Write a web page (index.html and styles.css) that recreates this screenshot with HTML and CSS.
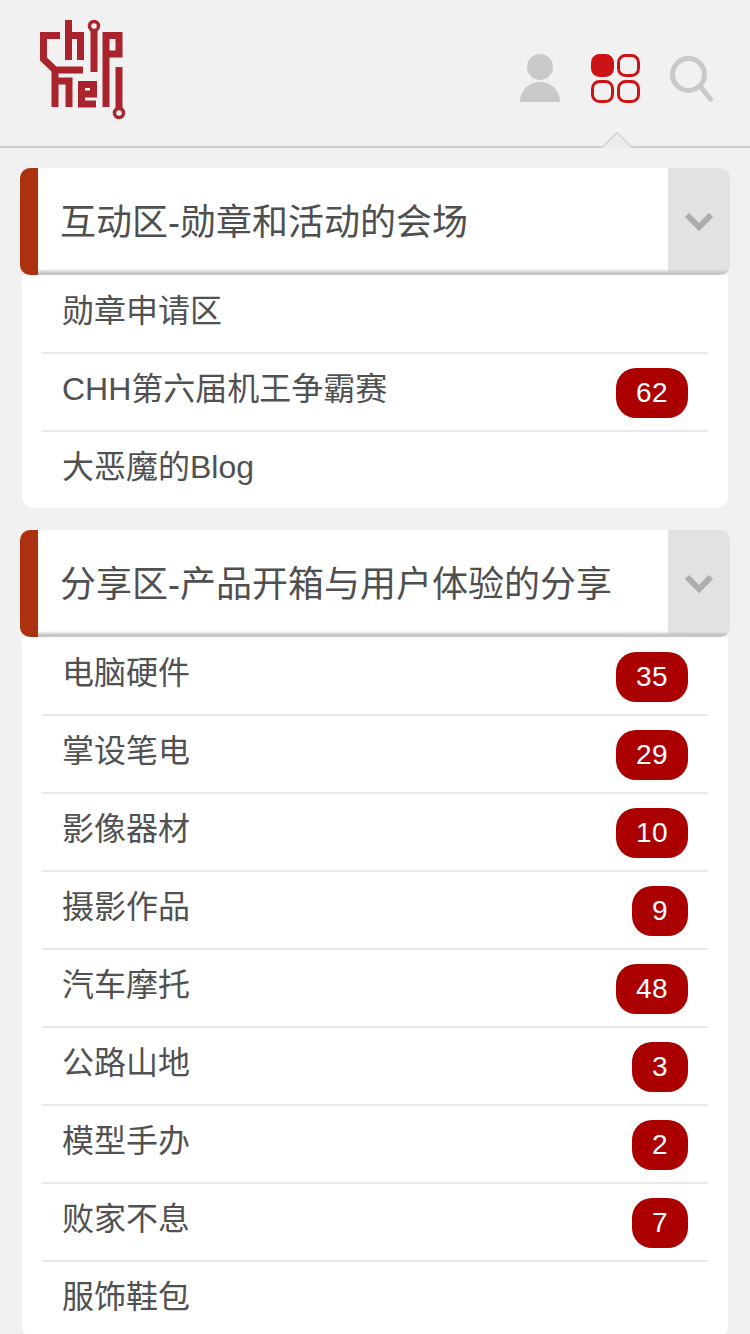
FILE: index.html
```html
<!DOCTYPE html>
<html lang="zh-CN">
<head>
<meta charset="utf-8">
<title>Chiphell</title>
<link rel="stylesheet" href="styles.css">
</head>
<body>
<header class="topbar">
  <a class="logo" aria-label="chiphell">
    <svg width="100" height="110" viewBox="0 0 100 110" fill="none" stroke="#a9242c" stroke-width="7">
      <g transform="translate(-36,-14)">
        <path d="M60 35.500H43.500V59L55 70H83"/>
        <path d="M55 70V107M55 81H69V107"/>
        <path d="M68.500 20V60M68.500 35.500H80.500V60"/>
        <circle cx="94" cy="26" r="4.500" stroke-width="3.500"/>
        <path d="M94 30V72"/>
        <path d="M106 107V35.500H119V54H106"/>
        <path d="M119 67V108"/>
        <circle cx="119" cy="113" r="4.500" stroke-width="3.500"/>
        <path d="M96 104H81.500V84.500H93.500V94H81"/>
      </g>
    </svg>
  </a>
  <nav class="tools">
    <svg class="tool" width="43" height="50" viewBox="0 0 43 50" fill="#c9c9c9">
      <circle cx="21" cy="14" r="13"/>
      <path d="M1 49C1 37 10 29 21 29S41 37 41 49Z"/>
    </svg>
    <svg class="tool tool-grid" width="50" height="50" viewBox="0 0 50 50" fill="none" stroke="#cc1417" stroke-width="3">
      <rect x="1.500" y="1.500" width="20" height="20" rx="7" fill="#cc1417"/>
      <rect x="27.500" y="1.500" width="20" height="20" rx="7"/>
      <rect x="1.500" y="27.500" width="20" height="20" rx="7"/>
      <rect x="27.500" y="27.500" width="20" height="20" rx="7"/>
    </svg>
    <svg class="tool" width="46" height="50" viewBox="0 0 46 50" fill="none" stroke="#c9c9c9" stroke-width="5">
      <circle cx="18.500" cy="21.500" r="16"/>
      <path d="M30 33L40.500 46" stroke-linecap="round"/>
    </svg>
  </nav>
  <span class="caret"></span>
</header>

<main class="content">
  <section class="group">
    <div class="group-head">
      <h2 class="group-title">互动区-勋章和活动的会场</h2>
      <span class="toggle">
        <svg width="30" height="20" viewBox="0 0 30 20" fill="none" stroke="#adadad" stroke-width="6"><path d="M3 3L15 15L27 3"/></svg>
      </span>
    </div>
    <ul class="forums">
      <li class="forum"><span class="name">勋章申请区</span></li>
      <li class="forum"><span class="name">CHH第六届机王争霸赛</span><span class="badge">62</span></li>
      <li class="forum"><span class="name">大恶魔的Blog</span></li>
    </ul>
  </section>

  <section class="group">
    <div class="group-head">
      <h2 class="group-title">分享区-产品开箱与用户体验的分享</h2>
      <span class="toggle">
        <svg width="30" height="20" viewBox="0 0 30 20" fill="none" stroke="#adadad" stroke-width="6"><path d="M3 3L15 15L27 3"/></svg>
      </span>
    </div>
    <ul class="forums">
      <li class="forum"><span class="name">电脑硬件</span><span class="badge">35</span></li>
      <li class="forum"><span class="name">掌设笔电</span><span class="badge">29</span></li>
      <li class="forum"><span class="name">影像器材</span><span class="badge">10</span></li>
      <li class="forum"><span class="name">摄影作品</span><span class="badge">9</span></li>
      <li class="forum"><span class="name">汽车摩托</span><span class="badge">48</span></li>
      <li class="forum"><span class="name">公路山地</span><span class="badge">3</span></li>
      <li class="forum"><span class="name">模型手办</span><span class="badge">2</span></li>
      <li class="forum"><span class="name">败家不息</span><span class="badge">7</span></li>
      <li class="forum"><span class="name">服饰鞋包</span></li>
    </ul>
  </section>
</main>
</body>
</html>
```
FILE: styles.css
```css
* { box-sizing: border-box; }
html, body { margin: 0; padding: 0; height: 1334px; overflow: hidden; }
body {
  background: #f1f1f1;
  color: #515151;
  font-family: "Liberation Sans", "Noto Sans CJK SC", sans-serif;
}
.topbar {
  position: relative;
  height: 148px;
  display: flex;
  justify-content: space-between;
  border-bottom: 2px solid #cdcdd2;
  padding: 14px 34px 0 36px;
}
.logo { display: block; height: 110px; }
.tools {
  display: flex;
  align-items: flex-start;
  gap: 29px;
  padding-top: 39px;
}
.tool { display: block; }
.tool-grid { margin-top: 1px; }
.caret {
  position: absolute;
  right: 121px;
  bottom: -2px;
  width: 24px;
  height: 24px;
  transform: translateY(12px) rotate(45deg);
  background: #ececec;
  border-top: 2px solid #d8d8dc;
  border-left: 2px solid #d8d8dc;
  clip-path: polygon(0 0, 100% 0, 0 100%);
}
.content {
  padding: 20px 20px 0;
  display: flex;
  flex-direction: column;
  gap: 22px;
}
.group-head {
  height: 107px;
  display: flex;
  align-items: stretch;
  border-radius: 10px;
  overflow: hidden;
}
.group-head::before {
  content: "";
  flex: none;
  width: 18px;
  background: #ab3110;
}
.group-title {
  flex: 1;
  margin: 0;
  padding: 0 0 0 22px;
  background: #fff;
  box-shadow: inset 0 -6px 3px -2px #c4c4c4;
  font-size: 36px;
  font-weight: 400;
  line-height: 110px;
  color: #4f4f4f;
  white-space: nowrap;
}
.toggle {
  width: 62px;
  background: #e2e2e2;
  box-shadow: inset 0 -6px 2px -2px #c6c6c6;
  display: flex;
  align-items: center;
  justify-content: center;
}
.forums {
  list-style: none;
  margin: 0 2px;
  padding: 1px 20px 0;
  background: #fff;
  border-radius: 0 0 12px 12px;
}
.forum {
  height: 78px;
  display: flex;
  align-items: center;
  justify-content: space-between;
  padding: 0 20px;
  border-bottom: 2px solid #e8e8e8;
}
.forum:last-child { border-bottom: 0; height: 76px; }
.name {
  font-size: 32px;
  line-height: 72px;
  margin-bottom: 6px;
  color: #515151;
}
.badge {
  height: 50px;
  padding: 0 20px;
  border-radius: 20px;
  background: #ab0000;
  color: #fff;
  font-size: 28px;
  letter-spacing: 0.4px;
  line-height: 50px;
  margin-top: 2px;
}
```
